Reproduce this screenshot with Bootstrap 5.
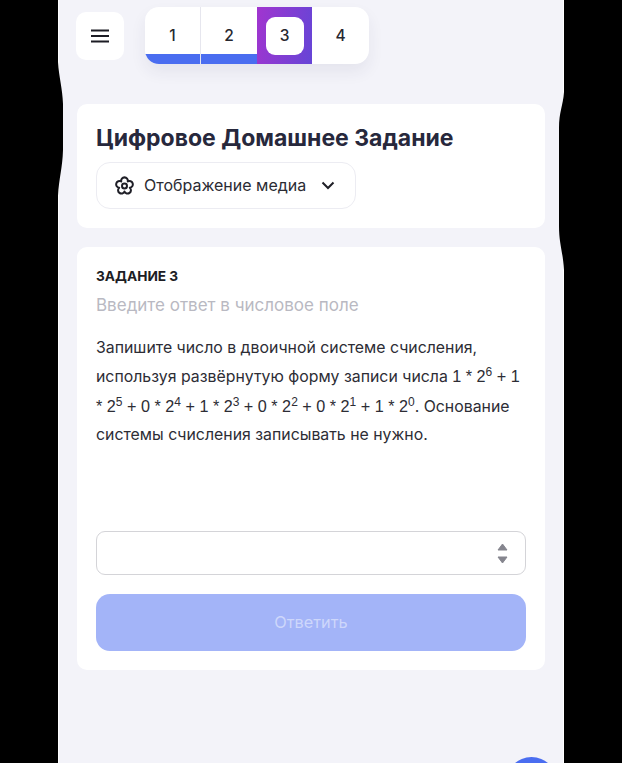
<!DOCTYPE html>
<html lang="ru"><head><meta charset="utf-8">
<link href="https://cdn.jsdelivr.net/npm/bootstrap@5.3.0/dist/css/bootstrap.min.css" rel="stylesheet">
<style>
html,body{height:100%;margin:0;background:#000;overflow:hidden}
body{font-family:Inter,"Liberation Sans",sans-serif;color:#2b2b33;position:relative}
.phone{width:506px;height:763px;margin-left:58px;background:#f3f3f9;padding:7px 19px 0;position:relative;overflow:hidden;box-shadow:inset 1px 0 #fff,inset -1px 0 #fff}
.topbar{height:57px;gap:21px;margin-left:-1px}
.menu-btn{width:48px;height:48px;border-radius:10px;background:#fff;margin-top:5px}
.stepper{width:224px;height:57px;border-radius:14px;background:#fff;overflow:hidden;box-shadow:0 8px 16px rgba(40,40,80,.07)}
.step{width:56px;font-size:15.5px;font-weight:500;color:#27272f;position:relative}
.step.done::after{content:"";position:absolute;left:0;right:0;bottom:0;height:10px;background:#4a6df0}
.step.sep{border-right:1px solid #e6e6ee}
.step.now{width:55px;background:linear-gradient(100deg,#a135cf,#6545d6)}
.step.last{width:57px}
.now-inner{width:38px;height:38px;background:#fff;border-radius:9px}
.panel{background:#fff;border-radius:10px;width:468px;padding:0 19px}
.panel-a{height:124px;margin-top:40px;padding-top:20px}
.panel-b{height:423px;margin-top:19px;padding-top:20px}
.ttl{font-size:23px;font-weight:700;color:#27283c;line-height:29px;margin:0}
.media-btn{width:260px;height:47px;margin-top:9px;border:1px solid #ececf2;border-radius:14px;font-size:16px;color:#2b2b33;padding:0 20px 0 16px;gap:8px}
.media-lbl{margin-top:-1px}
.task-no{font-size:13.7px;font-weight:700;color:#1d1d24;line-height:18px}
.hint{font-size:17px;color:#b9b9c2;line-height:20px;margin-top:10px}
.qtext{font-size:15.85px;line-height:28.4px;margin:19px 0 0;color:#2d2d35;height:197px}
.qtext sup{font-size:12px;top:-.5em;line-height:0}
.mth{font-family:"Liberation Sans",Arial,sans-serif;font-size:16.2px}
.num-field{height:44px;border:1.5px solid #d4d4d8;border-radius:9px;padding-right:17px}
.send{height:57px;margin-top:19px;border-radius:14px;background:#a3b4f8;color:#ced7fb;font-size:16.3px;border:0;width:100%}
.fab{width:51px;height:51px;border-radius:50%;background:#4a6df0;position:absolute;left:448px;top:757px}
.edge{position:absolute;top:0;height:763px}
</style></head>
<body>
<div class="phone">
<div class="d-flex topbar">
<div class="menu-btn d-flex align-items-center justify-content-center">
<svg width="18" height="14" viewBox="0 0 18 14"><path d="M0 1.500h18M0 7h18M0 12.500h18" stroke="#1c1c24" stroke-width="2"/></svg>
</div>
<div class="stepper d-flex">
<div class="step done sep d-flex align-items-center justify-content-center">1</div>
<div class="step done d-flex align-items-center justify-content-center">2</div>
<div class="step now d-flex align-items-center justify-content-center"><div class="now-inner d-flex align-items-center justify-content-center">3</div></div>
<div class="step last d-flex align-items-center justify-content-center">4</div>
</div>
</div>
<div class="panel panel-a">
<h1 class="ttl">Цифровое Домашнее Задание</h1>
<div class="media-btn d-flex align-items-center">
<svg width="23" height="23" viewBox="0 0 24 24" fill="none" stroke="#1f1f27" stroke-width="2.100" stroke-linejoin="round"><path d="M8.590 7.810A3.500 3.500 0 1 1 15.410 7.810A3.500 3.500 0 1 1 17.520 14.290A3.500 3.500 0 1 1 12 18.300A3.500 3.500 0 1 1 6.480 14.290A3.500 3.500 0 1 1 8.590 7.810z"/><circle cx="12" cy="12.500" r="2.600"/></svg>
<span class="flex-grow-1 media-lbl">Отображение медиа</span>
<svg width="14" height="9" viewBox="0 0 14 9" fill="none" stroke="#1f1f27" stroke-width="2"><path d="M1.500 1.500 7 7l5.500-5.500"/></svg>
</div>
</div>
<div class="panel panel-b">
<div class="task-no">ЗАДАНИЕ 3</div>
<div class="hint">Введите ответ в числовое поле</div>
<p class="qtext">Запишите число в двоичной системе счисления, используя развёрнутую форму записи числа <span class="mth">1 * 2<sup>6</sup> + 1 * 2<sup>5</sup> + 0 * 2<sup>4</sup> + 1 * 2<sup>3</sup> + 0 * 2<sup>2</sup> + 0 * 2<sup>1</sup> + 1 * 2<sup>0</sup></span>. Основание системы счисления записывать не нужно.</p>
<div class="num-field d-flex align-items-center justify-content-end">
<svg width="11" height="21" viewBox="0 0 11 21" fill="#85858e" stroke="#85858e" stroke-width="1" stroke-linejoin="round"><path d="M5.500 1 10 7H1zM5.500 20 1 14h9z"/></svg>
</div>
<button class="send" type="button">Ответить</button>
</div>
<div class="fab"></div>
</div>
<svg class="edge" style="left:56px" width="10" height="763" viewBox="0 0 10 763"><path d="M0 0H2V62C3 78 6.500 88 7 104V150C6.500 168 3 178 2 196V763H0z" fill="#000"/></svg>
<svg class="edge" style="left:554px" width="12" height="763" viewBox="0 0 12 763"><path d="M12 0H10V92C9 106 5 112 5 128V226C5 244 9 252 10 270V763H12z" fill="#000"/></svg>
<script src="https://cdn.jsdelivr.net/npm/bootstrap@5.3.0/dist/js/bootstrap.bundle.min.js"></script>
</body></html>
